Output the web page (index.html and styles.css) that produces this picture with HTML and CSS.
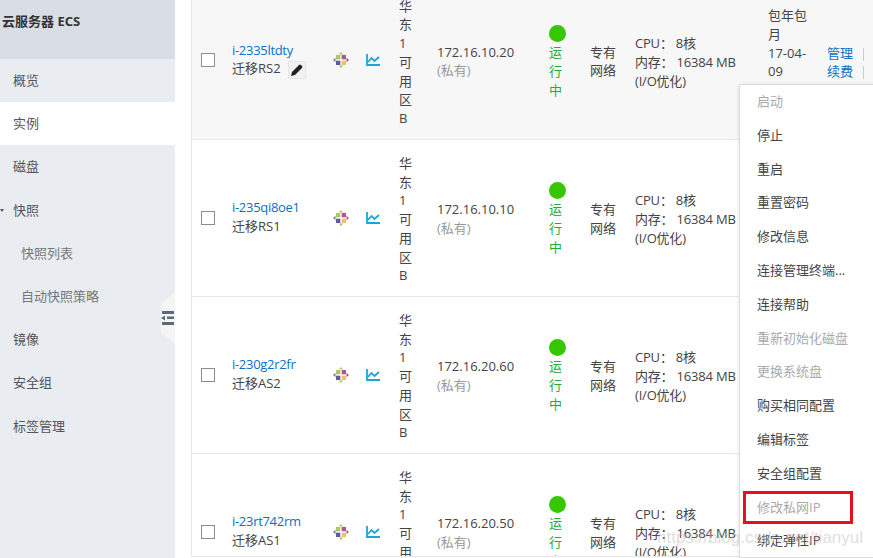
FILE: index.html
```html
<!DOCTYPE html>
<html lang="en">
<head>
    <meta charset="UTF-8">
    <meta name="viewport" content="width=device-width, initial-scale=1.0">
    <title>云服务器 ECS</title>
    <link rel="stylesheet" href="styles.css">
</head>
<body>
    <svg class="defs" width="0" height="0">
        <symbol id="os-icon" viewBox="0 0 16 16">
            <path d="M3 3h4.300v4.300H3z" fill="#9cc04a"/>
            <path d="M8.700 3H13v4.300H8.700z" fill="#a4387f"/>
            <path d="M3 8.700h4.300V13H3z" fill="#4b3c8c"/>
            <path d="M8.700 8.700H13V13H8.700z" fill="#efb44a"/>
            <path d="M8 0l2.200 2.500H5.800z" fill="#c9b04f"/>
            <path d="M16 8l-2.500 2.200V5.800z" fill="#a4387f"/>
            <path d="M8 16l-2.200-2.500h4.400z" fill="#8fc241"/>
            <path d="M0 8l2.500-2.200v4.400z" fill="#6d6a9c"/>
        </symbol>
        <symbol id="chart-icon" viewBox="0 0 14 12">
            <path d="M1 0v11h13M2 8l3.500-4 3 3 4.500-4" fill="none" stroke="#1ba5d8" stroke-width="1.800"/>
        </symbol>
    </svg>

    <div class="console">
        <div class="sidebar">
            <div class="side-title">云服务器 ECS</div>
            <div class="side-item">概览</div>
            <div class="side-item active">实例</div>
            <div class="side-item">磁盘</div>
            <div class="side-item caret">快照</div>
            <div class="side-item sub">快照列表</div>
            <div class="side-item sub">自动快照策略</div>
            <div class="side-item">镜像</div>
            <div class="side-item">安全组</div>
            <div class="side-item">标签管理</div>
            <div class="collapse">
                <svg width="13" height="16" viewBox="0 0 13 16">
                    <path d="M1 1h12v3H1zM1 12h12v3H1zM6 6.500h7v2.500H6zM4 5.500v5L0 8z" fill="#5a6b80"/>
                </svg>
            </div>
        </div>

        <div class="main">
            <table class="instances">
                <colgroup>
                    <col class="c-check"><col class="c-name"><col class="c-os"><col class="c-chart"><col class="c-zone">
                    <col class="c-ip"><col class="c-status"><col class="c-net"><col class="c-conf"><col class="c-pay"><col class="c-act">
                </colgroup>
                <!-- 第一行 -->
                <tr class="hover">
                    <td><span class="check"></span></td>
                    <td class="name"><a class="link">i-2335ltdty</a><br>迁移RS2<span class="edit"><svg width="14" height="14" viewBox="0 0 14 14"><path d="M1 13l1-4 7-7a1.500 1.500 0 0 1 2 0l1 1a1.500 1.500 0 0 1 0 2l-7 7z" fill="#222"/></svg></span></td>
                    <td><svg class="os" width="16" height="16"><use href="#os-icon"/></svg></td>
                    <td><svg class="chart" width="14" height="12"><use href="#chart-icon"/></svg></td>
                    <td class="cell zone">华东1可用区B</td>
                    <td class="ip">172.16.10.20<br><span class="muted">(私有)</span></td>
                    <td class="cell status"><span class="dot"></span>运行中</td>
                    <td class="net">专有网络</td>
                    <td class="cell conf">CPU： 8核<br>内存： 16384 MB<br>(I/O优化)</td>
                    <td class="pay">包年包月<br>17-04-09</td>
                    <td class="cell act"><a class="link">管理</a><i></i><br><a class="link">续费</a><i></i></td>
                </tr>
                <!-- 第二行 -->
                <tr>
                    <td><span class="check"></span></td>
                    <td class="name"><a class="link">i-235qi8oe1</a><br>迁移RS1</td>
                    <td><svg class="os" width="16" height="16"><use href="#os-icon"/></svg></td>
                    <td><svg class="chart" width="14" height="12"><use href="#chart-icon"/></svg></td>
                    <td class="cell zone">华东1可用区B</td>
                    <td class="ip">172.16.10.10<br><span class="muted">(私有)</span></td>
                    <td class="cell status"><span class="dot"></span>运行中</td>
                    <td class="net">专有网络</td>
                    <td class="cell conf">CPU： 8核<br>内存： 16384 MB<br>(I/O优化)</td>
                    <td></td>
                    <td></td>
                </tr>
                <!-- 第三行 -->
                <tr>
                    <td><span class="check"></span></td>
                    <td class="name"><a class="link">i-230g2r2fr</a><br>迁移AS2</td>
                    <td><svg class="os" width="16" height="16"><use href="#os-icon"/></svg></td>
                    <td><svg class="chart" width="14" height="12"><use href="#chart-icon"/></svg></td>
                    <td class="cell zone">华东1可用区B</td>
                    <td class="ip">172.16.20.60<br><span class="muted">(私有)</span></td>
                    <td class="cell status"><span class="dot"></span>运行中</td>
                    <td class="net">专有网络</td>
                    <td class="cell conf">CPU： 8核<br>内存： 16384 MB<br>(I/O优化)</td>
                    <td></td>
                    <td></td>
                </tr>
                <!-- 第四行 -->
                <tr>
                    <td><span class="check"></span></td>
                    <td class="name"><a class="link">i-23rt742rm</a><br>迁移AS1</td>
                    <td><svg class="os" width="16" height="16"><use href="#os-icon"/></svg></td>
                    <td><svg class="chart" width="14" height="12"><use href="#chart-icon"/></svg></td>
                    <td class="cell zone">华东1可用区B</td>
                    <td class="ip">172.16.20.50<br><span class="muted">(私有)</span></td>
                    <td class="cell status"><span class="dot"></span>运行中</td>
                    <td class="net">专有网络</td>
                    <td class="cell conf">CPU： 8核<br>内存： 16384 MB<br>(I/O优化)</td>
                    <td></td>
                    <td></td>
                </tr>
            </table>
        </div>

        <ul class="menu">
            <li class="off">启动</li>
            <li>停止</li>
            <li>重启</li>
            <li>重置密码</li>
            <li>修改信息</li>
            <li>连接管理终端...</li>
            <li>连接帮助</li>
            <li class="off">重新初始化磁盘</li>
            <li class="off">更换系统盘</li>
            <li>购买相同配置</li>
            <li>编辑标签</li>
            <li>安全组配置</li>
            <li class="off marked">修改私网IP</li>
            <li>绑定弹性IP</li>
        </ul>

        <div class="watermark">https://blog.csdn.net/tianyul</div>
    </div>
</body>
</html>
```

FILE: styles.css
```css
html, body {
    margin: 0;
    height: 100%;
    overflow: hidden;
}

body {
    font-family: "Open Sans", "Noto Sans CJK SC", sans-serif;
    font-size: 13px;
    line-height: 18.7px;
    color: #444;
    background-color: #ffffff;
}

.defs {
    position: absolute;
}

.console {
    position: relative;
    display: flex;
    height: 558px;
    overflow: hidden;
}

.sidebar {
    position: relative;
    flex: 0 0 175px;
    background-color: #e9edf2;
}

.side-title {
    height: 59px;
    padding: 12px 0 0 2px;
    box-sizing: border-box;
    background-color: #d9dee4;
    font-weight: 700;
    color: #333;
}

.side-item {
    position: relative;
    height: 43.200px;
    line-height: 43px;
    padding-left: 13px;
    color: #555;
}

.side-item.active {
    background-color: #ffffff;
}

.side-item.sub {
    padding-left: 21px;
    color: #777;
}

.side-item.caret::before {
    content: "";
    position: absolute;
    left: 0;
    top: 20px;
    border-left: 2px solid transparent;
    border-right: 2px solid transparent;
    border-top: 3px solid #555;
}

.collapse {
    position: absolute;
    right: 0;
    top: 292px;
    width: 14px;
    height: 52px;
    display: flex;
    align-items: center;
    background-color: #f5f5f6;
    clip-path: polygon(100% 0, 100% 100%, 0 78%, 0 22%);
}

.main {
    flex: 1;
    height: 556px;
    margin-left: 16px;
    overflow: hidden;
    border-left: 1px solid #e6e8ec;
    border-bottom: 1px solid #e6e8ec;
}

.instances {
    margin-top: -18px;
    width: 681px;
    table-layout: fixed;
    border-collapse: collapse;
}

.c-check { width: 40px; }
.c-name { width: 101px; }
.c-os { width: 33px; }
.c-chart { width: 33px; }
.c-zone { width: 38px; }
.c-ip { width: 112px; }
.c-status { width: 41px; }
.c-net { width: 45px; }
.c-conf { width: 133px; }
.c-pay { width: 59px; }
.c-act { width: 46px; }

.instances tr {
    height: 157px;
    border-bottom: 1px solid #e6e8ec;
}

.instances tr.hover {
    background-color: #f7f7f8;
}

.instances td {
    padding: 0;
    vertical-align: middle;
}

.instances td.cell {
    padding-top: 4px;
}

.instances td.ip {
    padding-top: 2px;
}

.instances td.name {
    padding-bottom: 2px;
}

.check {
    display: block;
    width: 12px;
    height: 12px;
    margin-left: 9px;
    border: 1px solid #8d8d8d;
    background-color: #ffffff;
}

.link {
    color: #0b6fc9;
}

.name .link {
    letter-spacing: -0.3px;
}

.edit {
    display: inline-flex;
    align-items: center;
    justify-content: center;
    box-sizing: border-box;
    width: 18px;
    height: 18px;
    margin: -2px 0 -2px 7px;
    vertical-align: middle;
    background-color: #f2f2f2;
    border: 1px solid #e6e6e6;
}

.os, .chart {
    display: block;
}

.os {
    opacity: 0.85;
}

.zone, .status {
    word-break: break-all;
}

.instances .zone {
    padding-right: 24px;
}

.muted {
    color: #999;
}

.status {
    color: #22ac38;
}

.instances .status {
    padding-right: 24px;
}

.dot {
    display: block;
    width: 17px;
    height: 17px;
    margin-bottom: 1px;
    border-radius: 50%;
    background-color: #36c700;
}

.instances .net {
    padding: 2px 18px 0 0;
}

.conf {
    letter-spacing: -0.2px;
}

.instances .pay {
    padding: 0 17px 33px 0;
}

.act i {
    display: inline-block;
    width: 1px;
    height: 13px;
    margin-left: 10px;
    vertical-align: middle;
    background-color: #ccc;
}

.menu {
    position: absolute;
    left: 739px;
    top: 84px;
    width: 160px;
    height: 472px;
    margin: 0;
    padding: 0;
    overflow: hidden;
    list-style: none;
    background-color: #ffffff;
    border: 1px solid #dcdcdc;
    box-shadow: 0 1px 4px rgba(0, 0, 0, 0.12);
}

.menu li {
    height: 33.800px;
    line-height: 32px;
    padding-left: 17px;
    color: #444;
}

.menu li.off {
    color: #aaa;
}

.menu li.marked {
    position: relative;
}

.menu li.marked::after {
    content: "";
    position: absolute;
    left: 3px;
    top: 0;
    width: 104px;
    height: 27px;
    border: 3px solid #e60f1f;
}

.watermark {
    position: absolute;
    left: 657px;
    top: 529px;
    font-family: "Liberation Sans", sans-serif;
    font-size: 17px;
    color: rgba(190, 190, 190, 0.5);
    white-space: nowrap;
}
```
